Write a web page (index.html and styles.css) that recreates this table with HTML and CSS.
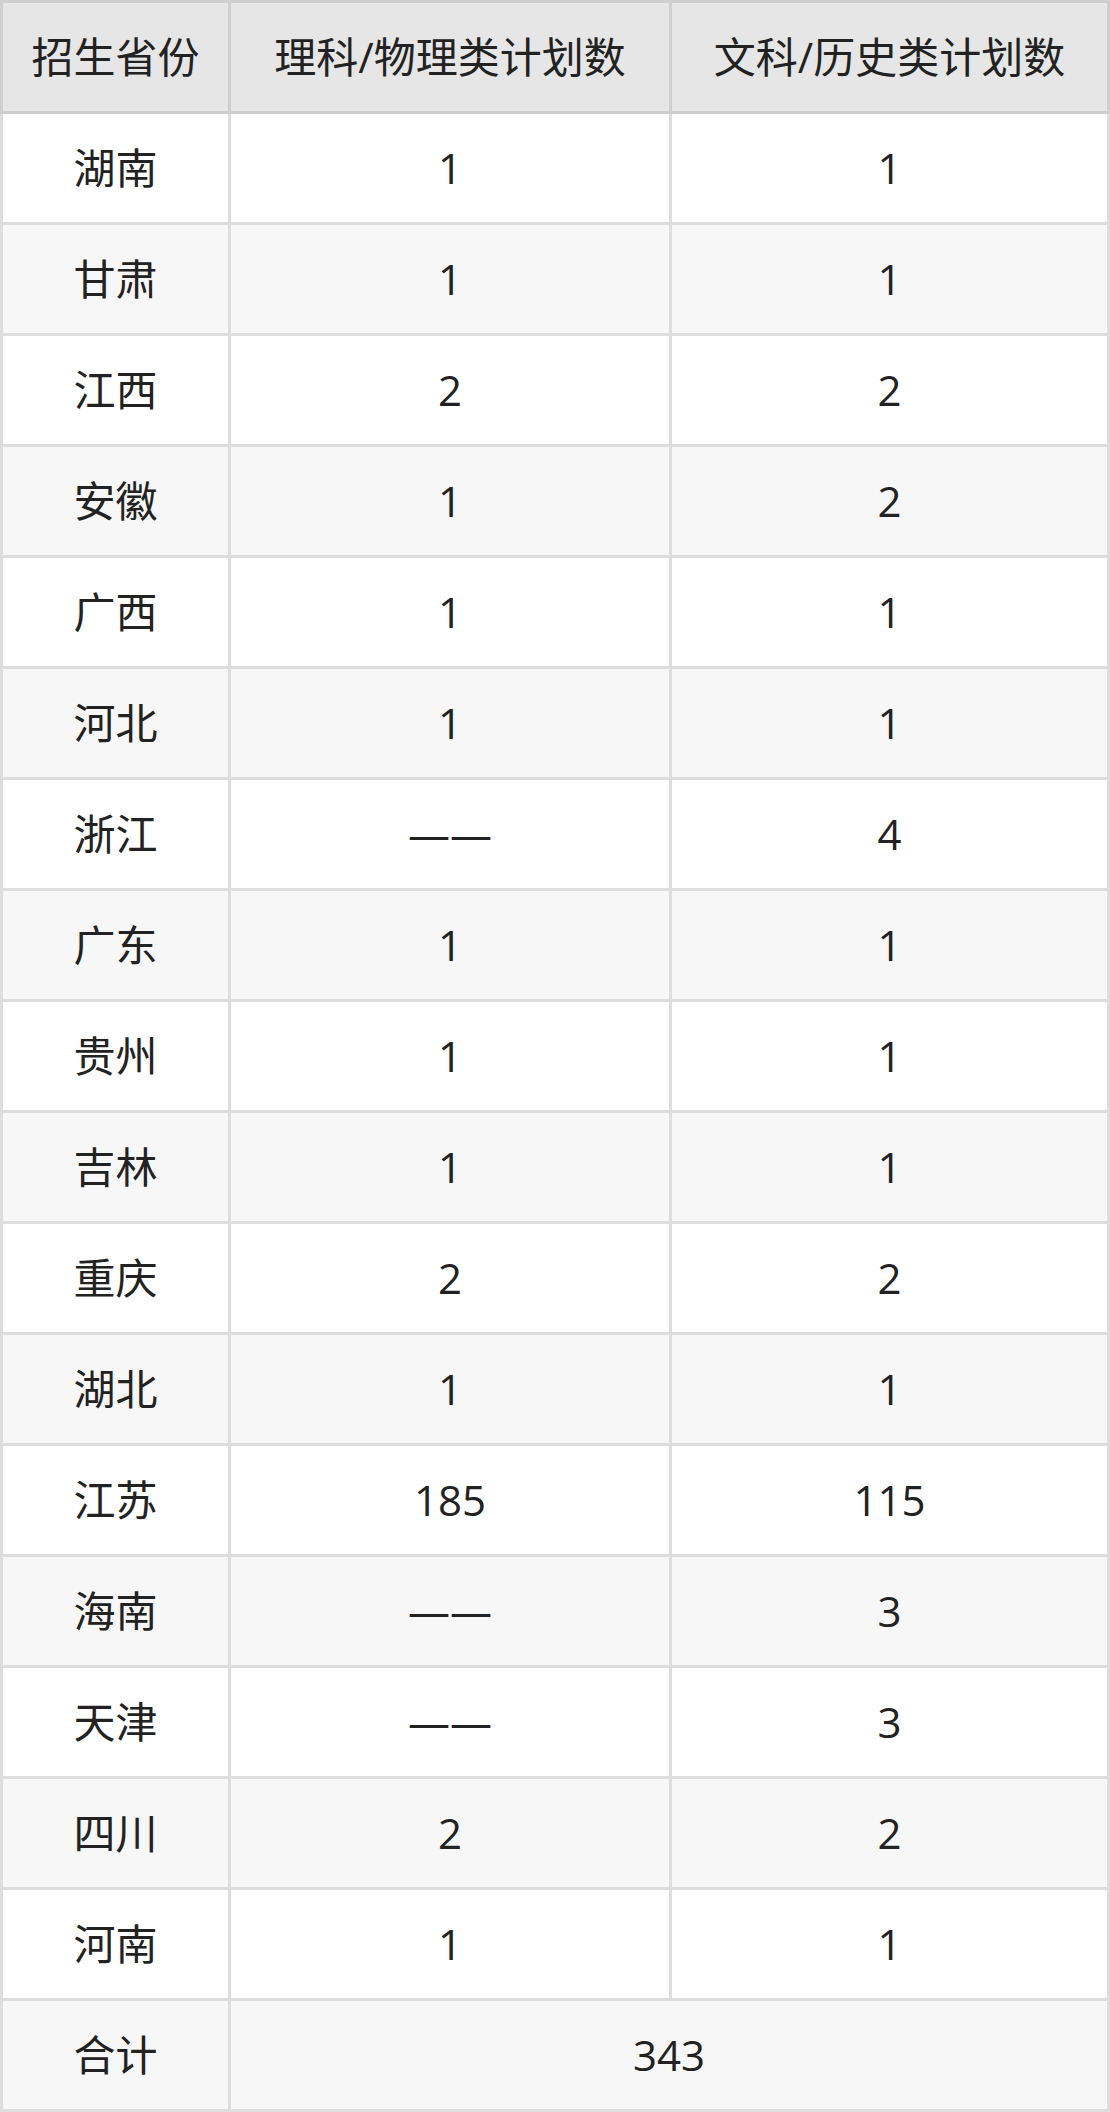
FILE: index.html
```
<!DOCTYPE html>
<html lang="zh">
<head>
<meta charset="utf-8">
<link rel="stylesheet" href="styles.css">
</head>
<body>
<table class="plan">
<colgroup><col class="c1"><col class="c2"><col class="c3"></colgroup>
<thead>
<tr><th>招生省份</th><th>理科/物理类计划数</th><th>文科/历史类计划数</th></tr>
</thead>
<tbody>
<tr><td>湖南</td><td>1</td><td>1</td></tr>
<tr><td>甘肃</td><td>1</td><td>1</td></tr>
<tr><td>江西</td><td>2</td><td>2</td></tr>
<tr><td>安徽</td><td>1</td><td>2</td></tr>
<tr><td>广西</td><td>1</td><td>1</td></tr>
<tr><td>河北</td><td>1</td><td>1</td></tr>
<tr><td>浙江</td><td>——</td><td>4</td></tr>
<tr><td>广东</td><td>1</td><td>1</td></tr>
<tr><td>贵州</td><td>1</td><td>1</td></tr>
<tr><td>吉林</td><td>1</td><td>1</td></tr>
<tr><td>重庆</td><td>2</td><td>2</td></tr>
<tr><td>湖北</td><td>1</td><td>1</td></tr>
<tr><td>江苏</td><td>185</td><td>115</td></tr>
<tr><td>海南</td><td>——</td><td>3</td></tr>
<tr><td>天津</td><td>——</td><td>3</td></tr>
<tr><td>四川</td><td>2</td><td>2</td></tr>
<tr><td>河南</td><td>1</td><td>1</td></tr>
<tr><td>合计</td><td colspan="2">343</td></tr>
</tbody>
</table>
</body>
</html>
```
FILE: styles.css
```
html, body {
  margin: 0;
  padding: 0;
  background: #ffffff;
}
.plan {
  width: 1110px;
  border-collapse: collapse;
  table-layout: fixed;
  font-family: "Open Sans", "Noto Sans CJK SC", sans-serif;
  font-size: 42px;
  color: #222222;
}
.c1 { width: 228px; }
.c2 { width: 441px; }
.c3 { width: 438px; }
.plan th,
.plan td {
  height: 108px;
  padding: 0;
  text-align: center;
  vertical-align: middle;
  font-weight: normal;
  line-height: 1.2;
}
.plan th {
  background: #e6e6e6;
  border: 3px solid #cfcfcf;
}
.plan td {
  border: 3px solid #dddddd;
}
.plan tbody tr:nth-child(even) td {
  background: #f7f7f7;
}
```
